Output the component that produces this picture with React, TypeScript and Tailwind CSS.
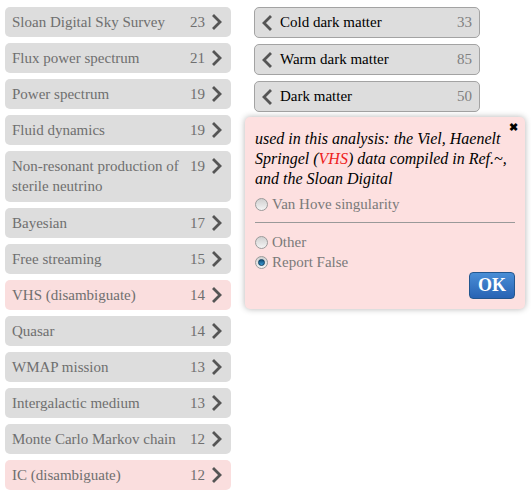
import React from "react";

const left = [
  { t: "Sloan Digital Sky Survey", n: 23 },
  { t: "Flux power spectrum", n: 21 },
  { t: "Power spectrum", n: 19 },
  { t: "Fluid dynamics", n: 19 },
  { t: "Non-resonant production of sterile neutrino", n: 19, double: true },
  { t: "Bayesian", n: 17 },
  { t: "Free streaming", n: 15 },
  { t: "VHS (disambiguate)", n: 14, pink: true },
  { t: "Quasar", n: 14 },
  { t: "WMAP mission", n: 13 },
  { t: "Intergalactic medium", n: 13 },
  { t: "Monte Carlo Markov chain", n: 12 },
  { t: "IC (disambiguate)", n: 12, pink: true },
  { t: "", n: 0 },
];

function ChevronRight() {
  return (
    <svg width="10" height="16" viewBox="0 0 10 16" className="shrink-0">
      <polyline points="2,2 8,8 2,14" fill="none" stroke="#555" strokeWidth="2.8" strokeLinecap="square" />
    </svg>
  );
}
function ChevronLeft() {
  return (
    <svg width="10" height="16" viewBox="0 0 10 16" className="shrink-0">
      <polyline points="8,2 2,8 8,14" fill="none" stroke="#555" strokeWidth="2.8" strokeLinecap="square" />
    </svg>
  );
}

function Radio({ checked }: { checked?: boolean }) {
  return (
    <span className="inline-block w-[13px] h-[13px] rounded-full border border-[#9a9a9a] bg-gradient-to-b from-[#d0d0d0] to-[#f4f4f4] relative shrink-0">
      {checked && (
        <span className="absolute left-[2px] top-[2px] w-[7px] h-[7px] rounded-full bg-gradient-to-b from-[#0e4f7a] to-[#3a9ad6] border border-[#0b3d5e]" />
      )}
    </span>
  );
}

export default function App() {
  return (
    <div className="w-[531px] h-[496px] overflow-hidden bg-white flex items-start text-[15px] font-['Liberation_Serif','Times_New_Roman',serif]">
      <div className="ml-[5px] mt-[7px] w-[226px] flex flex-col gap-[6px] shrink-0">
        {left.map((r, i) => (
          <div
            key={i}
            className={`shrink-0 rounded-[5px] flex items-start pl-[7px] pr-[9px] leading-[20px] text-[#6f6f6f] ${
              r.pink ? "bg-[#fadede]" : "bg-[#dddddd]"
            } ${r.double ? "h-[51px] pt-[5px]" : "h-[30px] pt-[5px]"}`}
          >
            <span className="flex-1 pr-[4px]">{r.t}</span>
            {r.n > 0 && (
              <>
                <span className="text-[#6f6f6f]">{r.n}</span>
                <span className="ml-[7px] mt-[2px]">
                  <ChevronRight />
                </span>
              </>
            )}
          </div>
        ))}
      </div>
      <div className="ml-[14px] mt-[7px] w-[280px] shrink-0 flex flex-col">
        <div className="ml-[9px] w-[226px] flex flex-col gap-[6px]">
          {[
            ["Cold dark matter", 33],
            ["Warm dark matter", 85],
            ["Dark matter", 50],
          ].map(([t, n]) => (
            <div
              key={t as string}
              className="h-[31px] rounded-[5px] border border-[#a3a3a3] bg-[#dddddd] flex items-center pl-[7px] pr-[7px] text-black"
            >
              <ChevronLeft />
              <span className="ml-[8px] flex-1">{t}</span>
              <span className="text-[#808080]">{n}</span>
            </div>
          ))}
        </div>
        <div className="mt-[5px] relative rounded-[5px] bg-[#fde0e0] shadow-[0_0_6px_rgba(0,0,0,0.3)] pl-[10px] pr-[10px] pt-[12px] pb-[10px]">
          <span className="absolute right-[7px] top-[5px] text-[11px] font-bold text-black leading-none">✖</span>
          <div className="italic text-[16px] leading-[20px] text-black whitespace-nowrap">
            used in this analysis: the Viel, Haenelt
            <br />
            Springel (<span className="text-[#ee2222]">VHS</span>) data compiled in Ref.~,
            <br />
            and the Sloan Digital
          </div>
          <div className="flex items-center gap-[4px] mt-[5px] text-[15px] leading-[20px] text-[#7a7a7a]">
            <Radio /> <span>Van Hove singularity</span>
          </div>
          <div className="h-px bg-[#999] mt-[8px] mb-[9px]" />
          <div className="flex items-center gap-[4px] text-[15px] leading-[20px] text-[#7a7a7a]">
            <Radio /> <span>Other</span>
          </div>
          <div className="flex items-center gap-[4px] text-[15px] leading-[20px] text-[#7a7a7a]">
            <Radio checked /> <span>Report False</span>
          </div>
          <div className="flex justify-end">
            <div className="w-[46px] h-[27px] rounded-[4px] border border-[#23578f] bg-gradient-to-b from-[#4a8ed6] to-[#2863b4] text-white font-bold text-[18px] flex items-center justify-center">
              OK
            </div>
          </div>
        </div>
      </div>
    </div>
  );
}
